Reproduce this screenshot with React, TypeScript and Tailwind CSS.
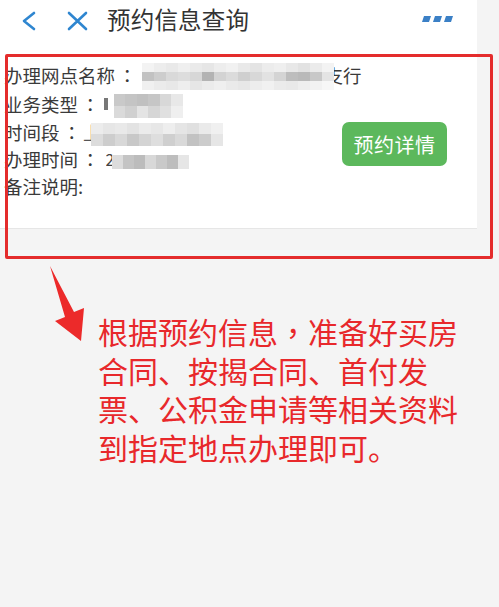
import React from "react";

const FONT = { fontFamily: '"Noto Sans CJK SC", "Noto Sans", sans-serif' };
const TC = { fontFamily: '"Noto Sans CJK TC", "Noto Sans CJK SC", sans-serif' };

function Mosaic({ rows, tw, th }: { rows: string[][]; tw: number; th: number }) {
  return (
    <span className="inline-flex flex-col align-middle blur-[0.6px]">
      {rows.map((r, i) => (
        <span key={i} className="flex">
          {r.map((c, j) => (
            <span key={j} className="block" style={{ width: tw, height: th, background: c }} />
          ))}
        </span>
      ))}
    </span>
  );
}

const Colon = () => (
  <span style={TC} className="ml-[3px]">
    ：
  </span>
);

const m1 = [
  ["#f3f3f3", "#ededed", "#e9e9e9", "#efefef", "#eaeaea", "#e6e6e6", "#ededed", "#f1f1f1", "#e9e9e9", "#e4e4e4", "#ececec", "#efefef", "#e8e8e8", "#e2e2e2", "#ebebeb", "#f3f3f3"],
  ["#c2c2c2", "#cdcdcd", "#d9d9d9", "#dddddd", "#d7d7d7", "#b3b3b3", "#d3d3d3", "#dbdbdb", "#cfcfcf", "#d8d8d8", "#e2e2e2", "#d4d4d4", "#bdbdbd", "#b9b9b9", "#c8c8c8", "#e4e4e4"],
  ["#f0f0f0", "#ebebeb", "#e8e8e8", "#eeeeee", "#e6e6e6", "#ebebeb", "#efefef", "#eaeaea", "#e7e7e7", "#ededed", "#f1f1f1", "#ebebeb", "#e9e9e9", "#eeeeee", "#f2f2f2", "#f7f7f7"],
];
const m2 = [
  ["#c9c9c9", "#c4c4c4", "#c0c0c0", "#c6c6c6", "#d8d8d8", "#e8e8e8"],
  ["#dadada", "#d0d0d0", "#e4e4e4", "#d6d6d6", "#e0e0e0", "#efefef"],
];
const m3 = [
  ["#ececec", "#e6e6e6", "#e9e9e9", "#e3e3e3", "#ebebeb", "#e7e7e7", "#eeeeee", "#e5e5e5", "#e0e0e0", "#eaeaea", "#f0f0f0"],
  ["#dcdcdc", "#cdcdcd", "#d8d8d8", "#c8c8c8", "#d4d4d4", "#dedede", "#cfcfcf", "#d9d9d9", "#c2c2c2", "#cccccc", "#e6e6e6"],
];
const m4 = [["#dcdcdc", "#c4c4c4", "#bcbcbc", "#d8d8d8", "#c9c9c9", "#bdbdbd", "#e6e6e6"]];

export default function App() {
  return (
    <div className="relative w-[499px] h-[607px] overflow-hidden bg-[#f4f4f4]" style={FONT}>
      <div className="w-[477px] flex flex-col">
        {/* header */}
        <div className="h-[44px] bg-white flex items-center">
          <svg width="40" height="44" viewBox="0 0 40 44" className="ml-[8px] shrink-0">
            <path d="M26 13 L16 21 L26 29" fill="none" stroke="#2f86d0" strokeWidth="2.6" strokeLinecap="round" strokeLinejoin="round" />
          </svg>
          <svg width="28" height="44" viewBox="0 0 28 44" className="ml-[16px] shrink-0">
            <path d="M5 13 L22 29 M22 13 L5 29" fill="none" stroke="#2f86d0" strokeWidth="2.6" strokeLinecap="round" />
          </svg>
          <span className="ml-[15px] text-[23.5px] leading-none text-[#333] tracking-[0.2px] -mt-[4px]">预约信息查询</span>
          <div className="flex-1" />
          <svg width="32" height="10" viewBox="0 0 32 10" className="mr-[23px] -mt-[4px]">
            <polygon points="2,1 9,1 7,7 0,7" fill="#3b80c6" />
            <polygon points="13,1 20,1 18,7 11,7" fill="#3b80c6" />
            <polygon points="24,1 31,1 29,7 22,7" fill="#3b80c6" />
          </svg>
        </div>
        {/* card */}
        <div className="bg-white h-[185px] border-b border-[#e6e6e6] pt-[17px] pl-[4px] text-[18.5px] leading-[27px] text-[#3a3a3a]">
          <div className="flex items-center whitespace-nowrap">
            <span>办理网点名称</span>
            <Colon />
            <span className="ml-[5px] relative z-10 -mr-[9px]">
              <Mosaic rows={m1} tw={12} th={9} />
            </span>
            <span>支行</span>
          </div>
          <div className="flex">
            <div className="flex flex-col w-[330px]">
              <div className="flex items-center whitespace-nowrap">
                <span>业务类型</span>
                <Colon />
                <span className="w-[4px] h-[12px] bg-[#777] ml-[4px] blur-[0.5px]" />
                <span className="ml-[6px]">
                  <Mosaic rows={m2} tw={11.5} th={12} />
                </span>
              </div>
              <div className="flex items-center whitespace-nowrap">
                <span>时间段</span>
                <Colon />
                <span className="text-[#555] w-[10px] overflow-hidden ml-[2px]">上</span>
                <span className="-ml-[2px]">
                  <Mosaic rows={m3} tw={12} th={11.5} />
                </span>
              </div>
              <div className="flex items-center whitespace-nowrap">
                <span>办理时间</span>
                <Colon />
                <span className="text-[#444] w-[8px] overflow-hidden text-[16px] ml-[6px]">2</span>
                <span className="-ml-[2px]">
                  <Mosaic rows={m4} tw={11} th={14} />
                </span>
              </div>
              <div>备注说明:</div>
            </div>
            <div className="pt-[32px] pl-[8px]">
              <div className="w-[105px] h-[44px] rounded-[7px] bg-[#5cb85c] text-white text-[20px] flex items-center justify-center tracking-[0.5px]">
                预约详情
              </div>
            </div>
          </div>
        </div>
      </div>

      {/* annotation */}
      <div className="flex items-start pl-[47px] pt-[35px]">
        <svg width="40" height="80" viewBox="0 0 40 80" className="shrink-0">
          <polygon points="3,2 27,48 37,44 34,77 8,57 18,53" fill="#ec2a2a" />
        </svg>
        <div className="ml-[11px] mt-[48px] text-[30px] leading-[38.5px] text-[#e8282b] whitespace-nowrap">
          <div>
            根据预约信息<span style={TC}>，</span>准备好买房
          </div>
          <div>合同、按揭合同、首付发</div>
          <div>票、公积金申请等相关资料</div>
          <div>到指定地点办理即可。</div>
        </div>
      </div>

      {/* red highlight box */}
      <div className="absolute left-[5px] top-[54px] w-[488px] h-[205px] border-[3px] border-[#e42c2c] rounded-[2px] pointer-events-none" />
    </div>
  );
}
